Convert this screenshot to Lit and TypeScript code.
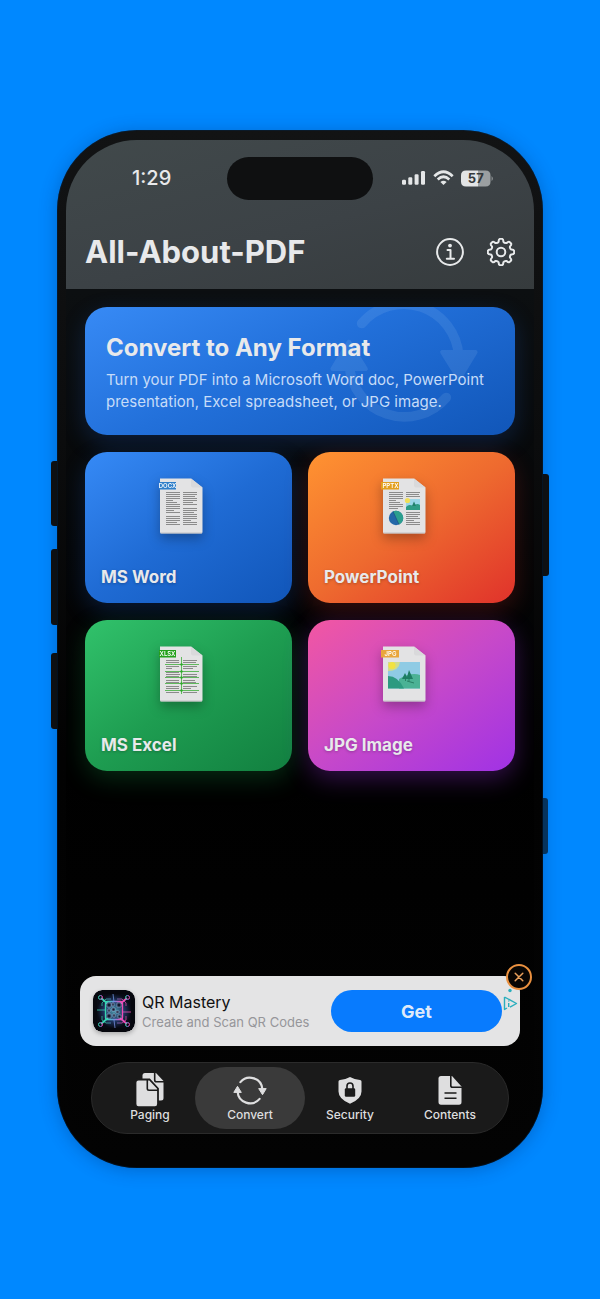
import { LitElement, html, svg, css } from "lit";
import { customElement, property } from "lit/decorators.js";

type FileKind = "docx" | "pptx" | "xlsx" | "jpg";
type TabKind = "paging" | "convert" | "security" | "contents";

const cycle = svg`
  <g fill="none" stroke="currentColor" stroke-width="2.2" stroke-linecap="round">
    <path d="M-9.6 -8.4A12.5 12.5 0 0 1 12.4 -1"/>
    <path d="M9.6 8.4A12.5 12.5 0 0 1 -12.4 1"/>
  </g>
  <g fill="currentColor" stroke="currentColor" stroke-width="1" stroke-linejoin="round">
    <path d="M8.700 -1.900H16.200L12.500 4.200Z"/>
    <path d="M-8.700 1.900H-16.200L-12.500 -4.200Z"/>
  </g>`;

/** Outline of an eight-toothed cog centred on the origin. */
function cogPath(): string {
  const pt = (r: number, deg: number) => {
    const a = (deg * Math.PI) / 180;
    return `${(r * Math.sin(a)).toFixed(2)} ${(-r * Math.cos(a)).toFixed(2)}`;
  };
  let d = "";
  for (let i = 0; i < 8; i++) {
    const c = i * 45;
    d += `${i ? "L" : "M"}${pt(10.6, c - 13)}Q${pt(12.9, c - 11)} ${pt(13.2, c - 5)}`;
    d += `L${pt(13.2, c + 5)}Q${pt(12.9, c + 11)} ${pt(10.6, c + 13)}Q${pt(9.2, c + 22.5)} ${pt(10.6, c + 32)}`;
  }
  return d + "Z";
}

/** Rows of grey text lines; each entry is a line's width, 0 leaves a blank. */
const rows = (x: number, y: number, widths: number[], color = "#8b8b8b") =>
  widths.map((w, i) => (w ? svg`<rect x=${x} y=${y + i * 2} width=${w} height="1" fill=${color}/>` : ""));

@customElement("file-icon")
export class FileIcon extends LitElement {
  @property() kind: FileKind = "docx";

  static styles = css`
    :host { display: block; filter: drop-shadow(0 5px 6px rgba(0, 0, 0, 0.28)); }
    svg { display: block; overflow: visible; }
    .tag { font: 600 6px Inter, sans-serif; fill: #fff; }
  `;

  private body() {
    switch (this.kind) {
      case "docx":
        return svg`${rows(8, 15, [14, 14, 14, 14, 7, 11, 14, 14, 14, 8, 14, 0, 14, 14, 14, 11, 14])}
          ${rows(25, 15, [14, 14, 12, 14, 14, 10, 14, 0, 14, 14, 11, 14, 14, 14, 8, 14, 14])}`;
      case "pptx":
        return svg`${rows(8, 15, [14, 14, 14, 14, 7, 11, 14, 14, 9])}
          ${rows(25, 15, [14, 13, 14])}${rows(25, 35, [14, 14, 12, 14, 8, 14, 14])}
          <rect x="25" y="22" width="14" height="11" fill="#9bd6e8"/>
          <circle cx="26.5" cy="23.5" r="2.600" fill="#f1df58"/>
          <path d="M25 30Q28 26.500 32 29Q36 25.500 39 28V33H25Z" fill="#2f9c86"/>
          <path d="M31 29L33 24.500 35 29Z" fill="#23806c"/>
          <circle cx="15" cy="41" r="7.2" fill="#2367a8"/>
          <path d="M15 41L12 34.400A7.200 7.200 0 0 1 18 47.600Z" fill="#2c9f8e"/>
          <path d="M12 34.400L18 47.600" stroke="#1b4f83" stroke-width=".7"/>`;
      case "xlsx":
        return svg`${rows(8, 15, [13, 13, 0, 13, 6, 0, 13, 14, 13, 0, 13, 13, 0, 13, 13, 0, 13])}
          ${rows(25, 15, [14, 13, 0, 14, 10, 0, 0, 14, 14, 0, 12, 13, 0, 14, 8, 0, 14])}
          <path d="M23.500 12V49M7 19.500H41M7 26.500H41M7 32.500H41M7 38.500H41M7 45.500H41" stroke="#3fae3a" stroke-width=".8"/>
          ${[19.5, 26.5, 32.5, 38.5, 45.5].map((y) => svg`<circle cx="23.5" cy=${y} r="1.200" fill="#2fa82a"/>`)}`;
      default:
        return svg`<rect x="7" y="17" width="32" height="26.500" fill="#8fcbe4"/>
          <path d="M7 17H19Q18 26 7 26Z" fill="#cfdc8c"/>
          <circle cx="11" cy="20.500" r="3.500" fill="#f2e23f"/>
          <path d="M18 34Q30 27 39 30V43.500H18Z" fill="#4bb295"/>
          <path d="M7 31Q17 31 23 43.500H7Z" fill="#2d9a80"/>
          <path d="M21 34L24 28 26 32 28 25 32 34Z" fill="#1d7d63"/>
          <path d="M24.500 33V36M28 33V36M26 36L33 38" stroke="#25775f" stroke-width=".9"/>`;
    }
  }

  render() {
    const colors = { docx: "#2f7fc9", pptx: "#e3a01f", xlsx: "#22a01b", jpg: "#e9a63c" };
    const wide = this.kind === "pptx" || this.kind === "jpg";
    return html`<svg width="62" height="62" viewBox="0 0 62 62" aria-hidden="true">
      <path d="M2 1.500H33L44.500 10.500V55Q44.500 56.500 43 56.500H3.500Q2 56.500 2 55Z" fill="#e3e3e4"/>
      <path d="M33 1.500L44.500 10.500H35Q33 10.500 33 8.500Z" fill="#d9d9db"/>
      <path d="M2.500 56H44" stroke="#b9b9bb" stroke-width=".8"/>
      ${this.body()}
      <rect x=${wide ? 0 : 1} y="5" width=${wide ? 18 : 17} height="7.500" fill=${colors[this.kind]}/>
      <text class="tag" x="9.5" y="11" text-anchor="middle">${this.kind.toUpperCase()}</text>
    </svg>`;
  }
}

@customElement("tab-icon")
export class TabIcon extends LitElement {
  @property() kind: TabKind = "paging";

  static styles = css`
    :host { display: block; }
    svg { display: block; }
    .cut { stroke: #1b1b1b; fill: none; }
    .hole { fill: #1b1b1b; }
  `;

  private body() {
    switch (this.kind) {
      case "paging":
        return svg`
          <path d="M13 1H24L31.500 9V26Q31.500 28.500 29 28.500H13Q10.500 28.500 10.500 26V3.500Q10.500 1 13 1Z"/>
          <path class="cut" stroke-width="1.6" d="M22.700 1V8Q22.700 9.800 24.500 9.800H32"/>
          <path stroke="#1b1b1b" stroke-width="1.800" d="M6.500 7.500H17.500L26 16.500V32Q26 35.200 23 35.200H6.500Q3.500 35.200 3.500 32V10.500Q3.500 7.500 6.500 7.500Z"/>
          <path class="cut" stroke-width="1.600" d="M15.300 8V16.500Q15.300 18.200 17 18.200H26"/>`;
      case "convert":
        return svg`<g transform="translate(18 18.500)">${cycle}</g>`;
      case "security":
        return svg`
          <path d="M18 5Q23.500 8 28 8Q29.500 8 29.500 9.500V19.500Q29.500 27 18 31.800Q6.500 27 6.500 19.500V9.500Q6.500 8 8 8Q12.500 8 18 5Z"/>
          <rect class="hole" x="12.800" y="16.200" width="10.400" height="8.600" rx="1.300"/>
          <path class="cut" stroke-width="1.600" d="M15 17V14Q15 11 18 11Q21 11 21 14V17"/>`;
      default:
        return svg`
          <path d="M9 4H20L29.500 14.500V30Q29.500 32.700 27 32.700H9Q6.500 32.700 6.500 30V6.500Q6.500 4 9 4Z"/>
          <path class="cut" stroke-width="1.600" d="M18.800 3.500V13.500Q18.800 15.300 20.600 15.300H30"/>
          <path class="cut" stroke-width="1.500" d="M12.500 21H24.500M12.500 26.300H24.500"/>`;
    }
  }

  render() {
    return html`<svg width="36" height="36" viewBox="0 0 36 36" fill="currentColor" aria-hidden="true">${this.body()}</svg>`;
  }
}

@customElement("app-root")
export class AppRoot extends LitElement {
  static styles = css`
    * { box-sizing: border-box; }
    :host {
      display: flex;
      min-height: 100vh;
      padding: 130px 57px 131px;
      box-sizing: border-box;
      background: #0088ff;
      font-family: Inter, sans-serif;
      color: #e8e9eb;
    }
    button { font: inherit; color: inherit; border: 0; padding: 0; margin: 0; background: none; cursor: pointer; }
    svg { display: block; }
    h1, h2, p { margin: 0; }

    .phone {
      position: relative;
      flex: 1;
      min-width: 0;
      display: flex;
      padding: 10px 9px 9px;
      border-radius: 80px;
      background: linear-gradient(#121314, #0b0c0d 30%, #020202 60%, #030303);
      box-shadow: 0 0 0 1px rgba(0, 40, 80, 0.35) inset, 0 2px 18px rgba(0, 30, 90, 0.3);
    }
    .key { position: absolute; right: 100%; width: 6px; height: 76px; border-radius: 3px 0 0 3px; background: #0d1013; }
    .action { top: 331px; height: 65px; }
    .up { top: 419px; }
    .down { top: 523px; }
    .power { top: 344px; height: 102px; right: auto; left: 100%; border-radius: 0 3px 3px 0; }
    .camera { top: 668px; height: 56px; width: 5px; right: auto; left: 100%; border-radius: 0 3px 3px 0; background: #06335c; }

    .screen {
      flex: 1;
      min-width: 0;
      display: flex;
      flex-direction: column;
      overflow: hidden;
      border-radius: 71px;
      background: linear-gradient(#0c0f11 15%, #050607 40%, #000 60%, #030303);
    }
    .top { padding: 16px 19px 17px; background: linear-gradient(165deg, #41494b, #3c4246 55%, #363b3d); }
    .status { display: grid; grid-template-columns: 1fr 146px 1fr; align-items: center; height: 44px; }
    .time { padding-left: 47px; font-size: 20px; font-weight: 500; }
    .island { height: 43px; border-radius: 22px; background: #0f1011; }
    .signals { display: flex; justify-content: flex-end; align-items: center; gap: 7px; padding-right: 22px; }
    .charge { font: 700 13px Inter, sans-serif; fill: #35393b; }
    .bar { display: flex; align-items: center; gap: 23px; height: 40px; margin-top: 32px; }
    .name { flex: 1; font-size: 31px; line-height: 40px; font-weight: 700; }

    .main { flex: 1; display: flex; flex-direction: column; gap: 17px; padding: 18px 19px; }
    .hero {
      position: relative;
      overflow: hidden;
      min-height: 128px;
      padding: 26px 21px 22px;
      border-radius: 22px;
      background: linear-gradient(155deg, #378af5, #2270da 45%, #1156b8);
    }
    .herowrap { border-radius: 22px; box-shadow: 0 8px 24px rgba(30, 110, 230, 0.22); }
    .mark { position: absolute; right: 36px; top: -17px; opacity: 0.1; color: #cfe6ff; }
    .lead { position: relative; font-size: 24px; line-height: 30px; font-weight: 700; }
    .copy { position: relative; margin-top: 6px; font-size: 15px; line-height: 22px; color: #c6dcf8; }

    .grid { display: grid; grid-template-columns: 1fr 1fr; gap: 17px 16px; }
    .card {
      display: flex;
      flex-direction: column;
      align-items: center;
      justify-content: space-between;
      height: 151px;
      padding: 25px 16px 15px;
      border-radius: 22px;
    }
    .label { align-self: flex-start; font-size: 17px; line-height: 22px; font-weight: 700; text-shadow: 0 1px 3px rgba(0, 0, 0, 0.25); }
    .docx { background: linear-gradient(145deg, #368af6, #1f6bd4 50%, #1156b9); box-shadow: 0 8px 24px rgba(30, 110, 230, 0.22); }
    .pptx { background: linear-gradient(145deg, #ff9331, #ee6a2f 50%, #e0322b); box-shadow: 0 8px 24px rgba(230, 50, 40, 0.22); }
    .xlsx { background: linear-gradient(145deg, #31c26b, #1e9d51 50%, #128040); box-shadow: 0 8px 24px rgba(20, 150, 70, 0.28); }
    .jpg { background: linear-gradient(145deg, #f257a2, #c749c9 50%, #a032e5); box-shadow: 0 8px 24px rgba(160, 50, 230, 0.32); }

    .ad {
      position: relative;
      display: flex;
      align-items: center;
      height: 70px;
      margin: 0 14px 16px;
      padding: 0 18px 0 13px;
      border-radius: 16px;
      background: #e4e4e5;
      color: #111;
    }
    .thumb { border-radius: 9px; box-shadow: 0 2px 4px rgba(0, 0, 0, 0.25); }
    .about { flex: 1; padding-left: 7px; }
    .app { font-size: 16px; line-height: 22px; }
    .note { font-size: 13px; line-height: 18px; color: #96969a; }
    .get { width: 171px; height: 42px; border-radius: 21px; background: #087bfe; color: #dfeafa; font-size: 18px; font-weight: 700; }
    .close {
      position: absolute;
      right: -12px;
      top: -12px;
      width: 26px;
      height: 26px;
      display: grid;
      place-items: center;
      border: 2px solid #e9903f;
      border-radius: 50%;
      background: #080604;
      color: #e9a05c;
    }
    .choices { position: absolute; right: 2px; top: 11px; }

    .tabs {
      display: grid;
      grid-template-columns: repeat(4, 1fr);
      height: 72px;
      margin: 0 25px 25px;
      padding: 4px 8px;
      border: 1px solid #2b2b2b;
      border-radius: 36px;
      background: #1a1a1a;
    }
    .tab {
      display: flex;
      flex-direction: column;
      align-items: center;
      margin: 0 -5px;
      padding-top: 5px;
      border-radius: 31px;
      color: #dededf;
      font-size: 12px;
      line-height: 14px;
      font-weight: 500;
    }
    .tab[aria-current="page"] { background: #3a3a3a; }
  `;

  private cards: { kind: FileKind; label: string }[] = [
    { kind: "docx", label: "MS Word" },
    { kind: "pptx", label: "PowerPoint" },
    { kind: "xlsx", label: "MS Excel" },
    { kind: "jpg", label: "JPG Image" },
  ];

  private tabs: { kind: TabKind; label: string }[] = [
    { kind: "paging", label: "Paging" },
    { kind: "convert", label: "Convert" },
    { kind: "security", label: "Security" },
    { kind: "contents", label: "Contents" },
  ];

  private header() {
    return html`<header class="top">
      <div class="status">
        <span class="time">1:29</span>
        <span class="island"></span>
        <div class="signals">
          <svg width="24" height="16" viewBox="0 0 24 16" fill="#e4e6e7">
            <rect x="0" y="9.800" width="4" height="5" rx="1.200"/><rect x="6.300" y="7.300" width="4" height="7.500" rx="1.200"/>
            <rect x="12.600" y="4.300" width="4" height="10.500" rx="1.200"/><rect x="19" y="1" width="4" height="13.800" rx="1.200"/>
          </svg>
          <svg width="21" height="16" viewBox="0 0 21 16" fill="none" stroke="#e4e6e7" stroke-width="2.700">
            <path d="M1.300 6.200Q10.500 -2.800 19.700 6.200"/><path d="M4.700 9.500Q10.500 4 16.300 9.500"/>
            <path d="M10.500 15L7.400 11.900Q10.500 9.400 13.600 11.900Z" fill="#e4e6e7" stroke="none"/>
          </svg>
          <svg width="32" height="17" viewBox="0 0 32 17">
            <path d="M5 .5H17V16.500H5Q0 16.500 0 11.500V5.500Q0 .5 5 .5Z" fill="#e2e4e5"/>
            <path d="M17 .5H24.500Q29.500 .5 29.500 5.500V11.500Q29.500 16.500 24.500 16.500H17Z" fill="#9b9fa1"/>
            <path d="M30.500 6Q32 7 32 8.500T30.500 11Z" fill="#858a8c"/>
            <text class="charge" x="14.800" y="13.200" text-anchor="middle">57</text>
          </svg>
        </div>
      </div>
      <div class="bar">
        <h1 class="name">All-About-PDF</h1>
        <button aria-label="Information">
          <svg width="28" height="28" viewBox="0 0 28 28" fill="none" stroke="#e8eaeb" stroke-width="2">
            <circle cx="14" cy="14" r="12.900"/><circle cx="14" cy="7.600" r="1.900" fill="#e8eaeb" stroke="none"/>
            <path d="M11.500 12H14.500V20.500M10.800 20.800H18" stroke-linecap="round" stroke-linejoin="round"/>
          </svg>
        </button>
        <button aria-label="Settings">
          <svg width="28" height="28" viewBox="-14 -14 28 28" fill="none" stroke="#e8eaeb" stroke-width="2" stroke-linejoin="round">
            <path d=${cogPath()}/><circle r="4.300"/>
          </svg>
        </button>
      </div>
    </header>`;
  }

  private thumb() {
    return html`<svg class="thumb" width="42" height="42" viewBox="0 0 42 42" aria-hidden="true">
      <defs>
        <linearGradient id="neon"><stop offset=".1" stop-color="#36d6b0"/><stop offset=".5" stop-color="#6f8fe0"/><stop offset=".9" stop-color="#f04ab4"/></linearGradient>
        <radialGradient id="halo"><stop offset="0" stop-color="#4b96a8"/><stop offset=".6" stop-color="#1f3460"/><stop offset="1" stop-color="#080a14"/></radialGradient>
      </defs>
      <rect width="42" height="42" rx="9" fill="#06070e"/>
      <rect x="4" y="4" width="34" height="34" rx="6" fill="url(#halo)"/>
      <g stroke="url(#neon)" fill="none">
        <path d="M8 8L15 14M34 8L27 14M8 34L15 28M34 34L27 28" stroke-width="1.800"/>
        <path d="M4 20H13M29 22H38M20 4.010L21 12M21 30L22 38" stroke-width=".8"/>
        <rect x="12.500" y="11.500" width="17" height="18" rx="2" stroke-width="1.300"/>
        <path d="M9 16V13L13 9H18M33 16V13L29 9H24M9 26V30L13 33H18M33 26V30L29 33H24" stroke-width=".7"/>
        <circle cx="7.500" cy="7.500" r="2"/><circle cx="34.500" cy="7.500" r="2"/><circle cx="7.500" cy="34.500" r="2"/><circle cx="34.500" cy="34.500" r="2"/>
      </g>
      <path d="M14 13h4v4h-4zM24 13h4v4h-4zM14 24h4v4h-4zM19 18h3v3h-3zM23 21h3v2h-3zM20 24h2v3h-2zM25 25h3v3h-3zM19 13h2v3h-2zM15 19h2v3h-2z" fill="#10182c" stroke="#a9bfe8" stroke-width=".5"/>
    </svg>`;
  }

  render() {
    return html`<div class="phone">
      <i class="key action"></i><i class="key up"></i><i class="key down"></i>
      <i class="key power"></i><i class="key camera"></i>
      <div class="screen">
        ${this.header()}
        <main class="main">
          <div class="herowrap">
            <section class="hero">
              <svg class="mark" width="150" height="141" viewBox="-17 -16 34 32" aria-hidden="true">${cycle}</svg>
              <h2 class="lead">Convert to Any Format</h2>
              <p class="copy">Turn your PDF into a Microsoft Word doc, PowerPoint presentation, Excel spreadsheet, or JPG image.</p>
            </section>
          </div>
          <div class="grid">
            ${this.cards.map(
              (c) => html`<button class="card ${c.kind}">
                <file-icon kind=${c.kind}></file-icon>
                <span class="label">${c.label}</span>
              </button>`
            )}
          </div>
        </main>
        <aside class="ad">
          ${this.thumb()}
          <div class="about">
            <p class="app">QR Mastery</p>
            <p class="note">Create and Scan QR Codes</p>
          </div>
          <button class="get">Get</button>
          <svg class="choices" width="15" height="24" viewBox="0 0 15 24" fill="none" stroke="#2aaebd" stroke-width="1.400" stroke-linejoin="round" aria-hidden="true">
            <circle cx="7" cy="3.500" r="1.700" fill="#2aaebd" stroke="none"/>
            <path d="M1.500 10V22.500L4 21M1.500 10L13.500 16.500 7 20.200"/><path d="M5.700 13.500V14.500M5.700 16V20"/>
          </svg>
          <button class="close" aria-label="Close ad">
            <svg width="10" height="10" viewBox="0 0 10 10" stroke="currentColor" stroke-width="1.500" stroke-linecap="round"><path d="M1.200 1.200L8.800 8.800M8.800 1.200L1.200 8.800"/></svg>
          </button>
        </aside>
        <nav class="tabs">
          ${this.tabs.map(
            (t) => html`<button class="tab" aria-current=${t.kind === "convert" ? "page" : "false"}>
              <tab-icon kind=${t.kind}></tab-icon>${t.label}
            </button>`
          )}
        </nav>
      </div>
    </div>`;
  }
}
